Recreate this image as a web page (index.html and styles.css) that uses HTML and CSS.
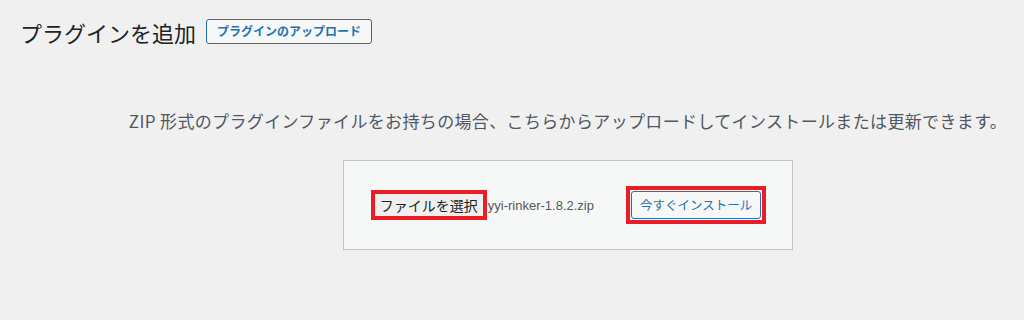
FILE: index.html
```html
<!DOCTYPE html>
<html lang="ja">
<head>
  <meta charset="UTF-8">
  <meta name="viewport" content="width=device-width, initial-scale=1.0">
  <title>プラグインを追加</title>
  <link rel="stylesheet" href="styles.css">
</head>
<body>

<div class="wrap">
  <div class="page-header">
    <h1>プラグインを追加</h1>
    <a href="#" class="upload-toggle">プラグインのアップロード</a>
  </div>

  <div class="upload-plugin">
    <p class="install-help">ZIP 形式のプラグインファイルをお持ちの場合、こちらからアップロードしてインストールまたは更新できます。</p>

    <form class="upload-form" onsubmit="return false;">
      <span class="mark">
        <button type="button" class="file-btn">ファイルを選択</button>
      </span>
      <span class="file-name">yyi-rinker-1.8.2.zip</span>
      <span class="mark mark-install">
        <button type="submit" class="btn">今すぐインストール</button>
      </span>
    </form>
  </div>
</div>

</body>
</html>
```

FILE: styles.css
```css
body {
  font-family: "Noto Sans CJK JP", "Noto Sans", sans-serif;
  margin: 0;
  padding: 0;
  background-color: #f0f0f1;
  color: #3c434a;
}
.wrap {
  padding: 19px 20px 0 20px;
}
.page-header {
  display: flex;
  align-items: center;
  gap: 10px;
  height: 25px;
}
.page-header h1 {
  margin: 0;
  font-size: 22px;
  font-weight: 400;
  line-height: 26px;
  color: #1d2327;
}
.upload-toggle {
  display: inline-block;
  box-sizing: border-box;
  height: 25px;
  line-height: 22px;
  padding: 0 10px;
  font-size: 12px;
  font-weight: 600;
  color: #2271b1;
  text-decoration: none;
  border: 1px solid #2271b1;
  border-radius: 3px;
  background-color: #f6f7f7;
}
.upload-plugin {
  display: flex;
  flex-direction: column;
  align-items: center;
  padding-left: 112px;
}
.install-help {
  margin: 64px 0 0 0;
  font-size: 17px;
  line-height: 26px;
  letter-spacing: 0.35px;
  white-space: nowrap;
  color: #50575e;
}
.upload-form {
  display: flex;
  align-items: center;
  margin-top: 26px;
  padding: 25px 26px 25px 27px;
  background-color: #f6f7f7;
  border: 1px solid #c3c4c7;
}
.mark {
  display: inline-flex;
  border: 4px solid #ec1c24;
}
.file-btn {
  font-family: "Noto Sans CJK JP", sans-serif;
  font-size: 14px;
  line-height: 20px;
  height: 22px;
  padding: 0 5px;
  color: #1d1d1d;
  background-color: #efefef;
  border: none;
  margin: 0;
}
.file-name {
  font-family: "Liberation Sans", Arial, sans-serif;
  font-size: 13px;
  color: #50575e;
  margin-left: 1px;
}
.mark-install {
  margin-left: 32px;
  padding: 1px;
}
.btn {
  font-family: "Noto Sans CJK JP", sans-serif;
  font-size: 12.5px;
  height: 28px;
  line-height: 26px;
  padding: 0 8px;
  margin: 0;
  color: #2271b1;
  background-color: #f6f7f7;
  border: 1px solid #2271b1;
  border-radius: 3px;
  cursor: pointer;
}
```
